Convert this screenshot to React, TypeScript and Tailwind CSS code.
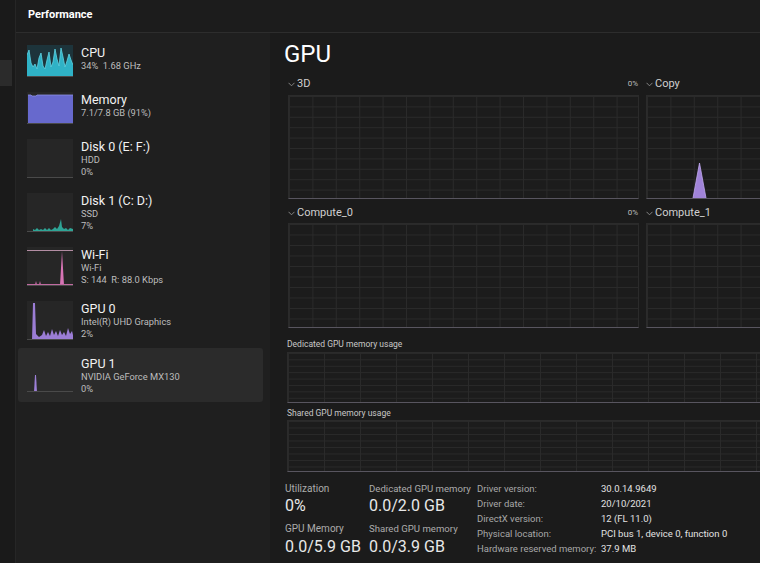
import { useId, type ReactNode } from "react";

function Chevron() {
  return (
    <svg width="7" height="5" viewBox="0 0 7 5" className="shrink-0">
      <polyline points="0.5,0.8 3.5,3.8 6.5,0.8" fill="none" stroke="#8f8f8f" strokeWidth="0.9" />
    </svg>
  );
}

// graph with grid background drawn by svg pattern
function GridGraph({ w, h, cellW, cellH, children }: { w: number; h: number; cellW: number; cellH: number; children?: ReactNode }) {
  const id = "g" + useId().replace(/[^a-zA-Z0-9]/g, "");
  return (
    <div className="relative shrink-0 bg-[#1c1c1c] border-t border-l border-r border-[#2b2b2b] border-b border-b-[#58555f]" style={{ width: w, height: h }}>
      <svg className="absolute inset-0 w-full h-full">
        <defs>
          <pattern id={id} width={cellW} height={cellH} patternUnits="userSpaceOnUse">
            <path d={`M ${cellW} 0.5 L 0.5 0.5 0.5 ${cellH}`} fill="none" stroke="#2a2a2a" strokeWidth="1" />
          </pattern>
        </defs>
        <rect width="100%" height="100%" fill={`url(#${id})`} />
        {children}
      </svg>
    </div>
  );
}

function Thumb({ h, children, bare }: { h: number; children?: ReactNode; bare?: boolean }) {
  return (
    <div className={`w-[46px] shrink-0 ${bare ? "" : "bg-[#262626]"}`} style={{ height: h }}>
      <svg width="46" height={h} viewBox={`0 0 46 ${h}`}>
        {children}
        <line x1="0" y1={h - 0.5} x2="46" y2={h - 0.5} stroke="#4a4a4a" strokeWidth="1" />
      </svg>
    </div>
  );
}

const cpuPts = [
  [0, 10], [2, 5], [4, 18], [6, 22], [8, 19], [10, 24], [12, 13], [14, 8], [16, 21], [18, 24], [20, 15],
  [22, 7], [24, 22], [26, 17], [28, 4], [30, 14], [32, 21], [34, 3], [36, 12], [38, 22], [40, 16], [42, 9], [44, 15], [46, 20],
];

const thumbs: Record<string, ReactNode> = {
  cpu: (
    <Thumb h={32}>
      <rect width="46" height="32" fill="#1d343b" />
      <polygon points={"0,32 " + cpuPts.map((p) => p.join(",")).join(" ") + " 46,32"} fill="#2fb2c6" />
      <polyline points={cpuPts.map((p) => p.join(",")).join(" ")} fill="none" stroke="#5fd3e3" strokeWidth="0.8" />
    </Thumb>
  ),
  mem: (
    <Thumb h={32}>
      <polygon points="1,32 1,3 4,3 5,4 9,4 10,3 46,3 46,32" fill="#6769cd" />
      <polyline points="1,3 4,3 5,4 9,4 10,3 46,3" fill="none" stroke="#8d90e4" strokeWidth="0.8" />
    </Thumb>
  ),
  disk0: <Thumb h={39} />,
  disk1: (
    <Thumb h={39}>
      <polygon
        points="6,39 6,36 8,37 10,35 12,37 14,36 16,37 18,35 20,37 22,35 24,37 26,36 28,34 30,36 32,33 34,26 35,34 37,36 39,35 41,37 43,35 46,36 46,39"
        fill="#2ea596"
      />
    </Thumb>
  ),
  wifi: (
    <Thumb h={39}>
      <line x1="0" y1="3.5" x2="46" y2="3.5" stroke="#b38da3" strokeWidth="1" />
      <polygon points="8,38 9,34 10,38 12,38 13,34 14,38 33,38 35,4 37,38" fill="#d774b5" />
      <line x1="0" y1="37.5" x2="46" y2="37.5" stroke="#c06aa0" strokeWidth="1" />
    </Thumb>
  ),
  gpu0: (
    <Thumb h={39}>
      <polygon
        points="5,39 6,2 8,2 9,33 12,36 15,34 17,29 19,35 21,31 23,35 25,28 27,34 29,30 31,35 33,29 35,34 37,31 39,35 41,27 43,33 45,30 46,34 46,39"
        fill="#9b7dd5"
      />
    </Thumb>
  ),
  gpu1: (
    <Thumb h={36} bare>
      <polygon points="7,36 8,19 9,19 10,36" fill="#9d80d8" />
    </Thumb>
  ),
};

const items = [
  { key: "cpu", title: "CPU", lines: ["34%  1.68 GHz"] },
  { key: "mem", title: "Memory", lines: ["7.1/7.8 GB (91%)"] },
  { key: "disk0", title: "Disk 0 (E: F:)", lines: ["HDD", "0%"] },
  { key: "disk1", title: "Disk 1 (C: D:)", lines: ["SSD", "7%"] },
  { key: "wifi", title: "Wi-Fi", lines: ["Wi-Fi", "S: 144  R: 88.0 Kbps"] },
  { key: "gpu0", title: "GPU 0", lines: ["Intel(R) UHD Graphics", "2%"] },
  { key: "gpu1", title: "GPU 1", lines: ["NVIDIA GeForce MX130", "0%"], selected: true },
];

function SideItem({ it }: { it: (typeof items)[number] }) {
  return (
    <div
      className={`ml-[2px] w-[245px] px-[9px] flex items-start gap-[8px] rounded-[3px] ${
        it.selected ? "bg-[#2b2b2b] pt-[8px] pb-[7px]" : "py-[7px]"
      }`}
    >
      {thumbs[it.key]}
      <div className="flex flex-col whitespace-pre">
        <div className="text-[12.5px] leading-[15px] text-[#f2f2f2]">{it.title}</div>
        {it.lines.map((l) => (
          <div key={l} className="text-[9.3px] leading-[12px] text-[#bdbdbd]">
            {l}
          </div>
        ))}
      </div>
    </div>
  );
}

function GraphLabel({ name, pct }: { name: string; pct?: boolean }) {
  return (
    <div className="h-[14px] flex items-center justify-between">
      <div className="flex items-center gap-[2px]">
        <Chevron />
        <span className="text-[11px] text-[#d0d0d0]">{name}</span>
      </div>
      {pct && <span className="text-[8px] text-[#bdbdbd] pr-[1px]">0%</span>}
    </div>
  );
}

const details = [
  ["Driver version:", "30.0.14.9649"],
  ["Driver date:", "20/10/2021"],
  ["DirectX version:", "12 (FL 11.0)"],
  ["Physical location:", "PCI bus 1, device 0, function 0"],
  ["Hardware reserved memory:", "37.9 MB"],
];

export default function App() {
  return (
    <div className="w-[760px] h-[563px] overflow-hidden flex bg-[#1c1c1c] font-['Roboto',sans-serif] select-none">
      {/* nav rail */}
      <div className="w-[16px] shrink-0 bg-[#1a1a1a] border-r border-[#262626]">
        <div className="mt-[60px] h-[26px] w-[12px] bg-[#2b2b2b]" />
      </div>

      <div className="flex-1 flex flex-col min-w-0">
        <div className="h-[33px] shrink-0 border-b border-[#2d2d2d] flex items-center pl-[12px] pb-[2px]">
          <span className="text-[11px] font-bold text-white">Performance</span>
        </div>

        <div className="flex-1 flex min-h-0">
          {/* sidebar */}
          <div className="w-[254px] shrink-0 bg-[#1f1f1f] pt-[5px] flex flex-col gap-[1px]">
            {items.map((it) => (
              <SideItem key={it.key} it={it} />
            ))}
          </div>

          {/* main */}
          <div className="flex-1 min-w-0 overflow-hidden bg-[#1b1b1b] pl-[17px] flex flex-col">
            <div className="mt-[7px] h-[28px] -ml-[3px] text-[24px] leading-[28px] text-white">GPU</div>

            <div className="mt-[9px] ml-[1px] flex gap-[7px]">
              <div className="w-[351px] shrink-0">
                <GraphLabel name="3D" pct />
                <div className="mt-[4px]">
                  <GridGraph w={351} h={104} cellW={23.4} cellH={10.4} />
                </div>
              </div>
              <div className="w-[351px] shrink-0">
                <GraphLabel name="Copy" />
                <div className="mt-[4px]">
                  <GridGraph w={351} h={104} cellW={23.4} cellH={10.4}>
                    <polygon points="46,102 52.5,67 59,102" fill="#a083d8" />
                    <polyline points="46,102 52.5,67 59,102" fill="none" stroke="#c0a8ee" strokeWidth="0.8" />
                  </GridGraph>
                </div>
              </div>
            </div>

            <div className="mt-[7px] ml-[1px] flex gap-[7px]">
              <div className="w-[351px] shrink-0">
                <GraphLabel name="Compute_0" pct />
                <div className="mt-[3px]">
                  <GridGraph w={351} h={105} cellW={23.4} cellH={10.5} />
                </div>
              </div>
              <div className="w-[351px] shrink-0">
                <GraphLabel name="Compute_1" />
                <div className="mt-[3px]">
                  <GridGraph w={351} h={105} cellW={23.4} cellH={10.5} />
                </div>
              </div>
            </div>

            <div className="mt-[9px] h-[14px] flex items-center text-[8.5px] text-[#c8c8c8]">Dedicated GPU memory usage</div>
            <div className="mt-[1px]">
              <GridGraph w={490} h={51} cellW={36} cellH={6.4} />
            </div>
            <div className="mt-[3px] h-[14px] flex items-center text-[8.5px] text-[#c8c8c8]">Shared GPU memory usage</div>
            <GridGraph w={490} h={52} cellW={36} cellH={6.5} />

            {/* stats */}
            <div className="mt-[11px] flex items-start whitespace-nowrap">
              <div className="w-[84px] shrink-0 -ml-[2px]">
                <div className="text-[10px] leading-[12px] text-[#acacac]">Utilization</div>
                <div className="mt-[1px] text-[16px] leading-[20px] text-[#e8e8e8]">0%</div>
                <div className="mt-[7px] text-[10px] leading-[12px] text-[#acacac]">GPU Memory</div>
                <div className="mt-[2px] text-[16px] leading-[20px] text-[#e8e8e8]">0.0/5.9 GB</div>
              </div>
              <div className="w-[108px] shrink-0">
                <div className="text-[9.6px] leading-[12px] text-[#acacac]">Dedicated GPU memory</div>
                <div className="mt-[1px] text-[16px] leading-[20px] text-[#e8e8e8]">0.0/2.0 GB</div>
                <div className="mt-[7px] text-[9.6px] leading-[12px] text-[#acacac]">Shared GPU memory</div>
                <div className="mt-[2px] text-[16px] leading-[20px] text-[#e8e8e8]">0.0/3.9 GB</div>
              </div>
              <div className="-mt-[2px] grid grid-cols-[124px_auto] text-[9.5px] leading-[15px]">
                {details.map(([k, v]) => (
                  <div key={k} className="contents">
                    <span className="text-[#a8a8a8]">{k}</span>
                    <span className="text-[#e2e2e2]">{v}</span>
                  </div>
                ))}
              </div>
            </div>
          </div>
        </div>
      </div>
    </div>
  );
}
